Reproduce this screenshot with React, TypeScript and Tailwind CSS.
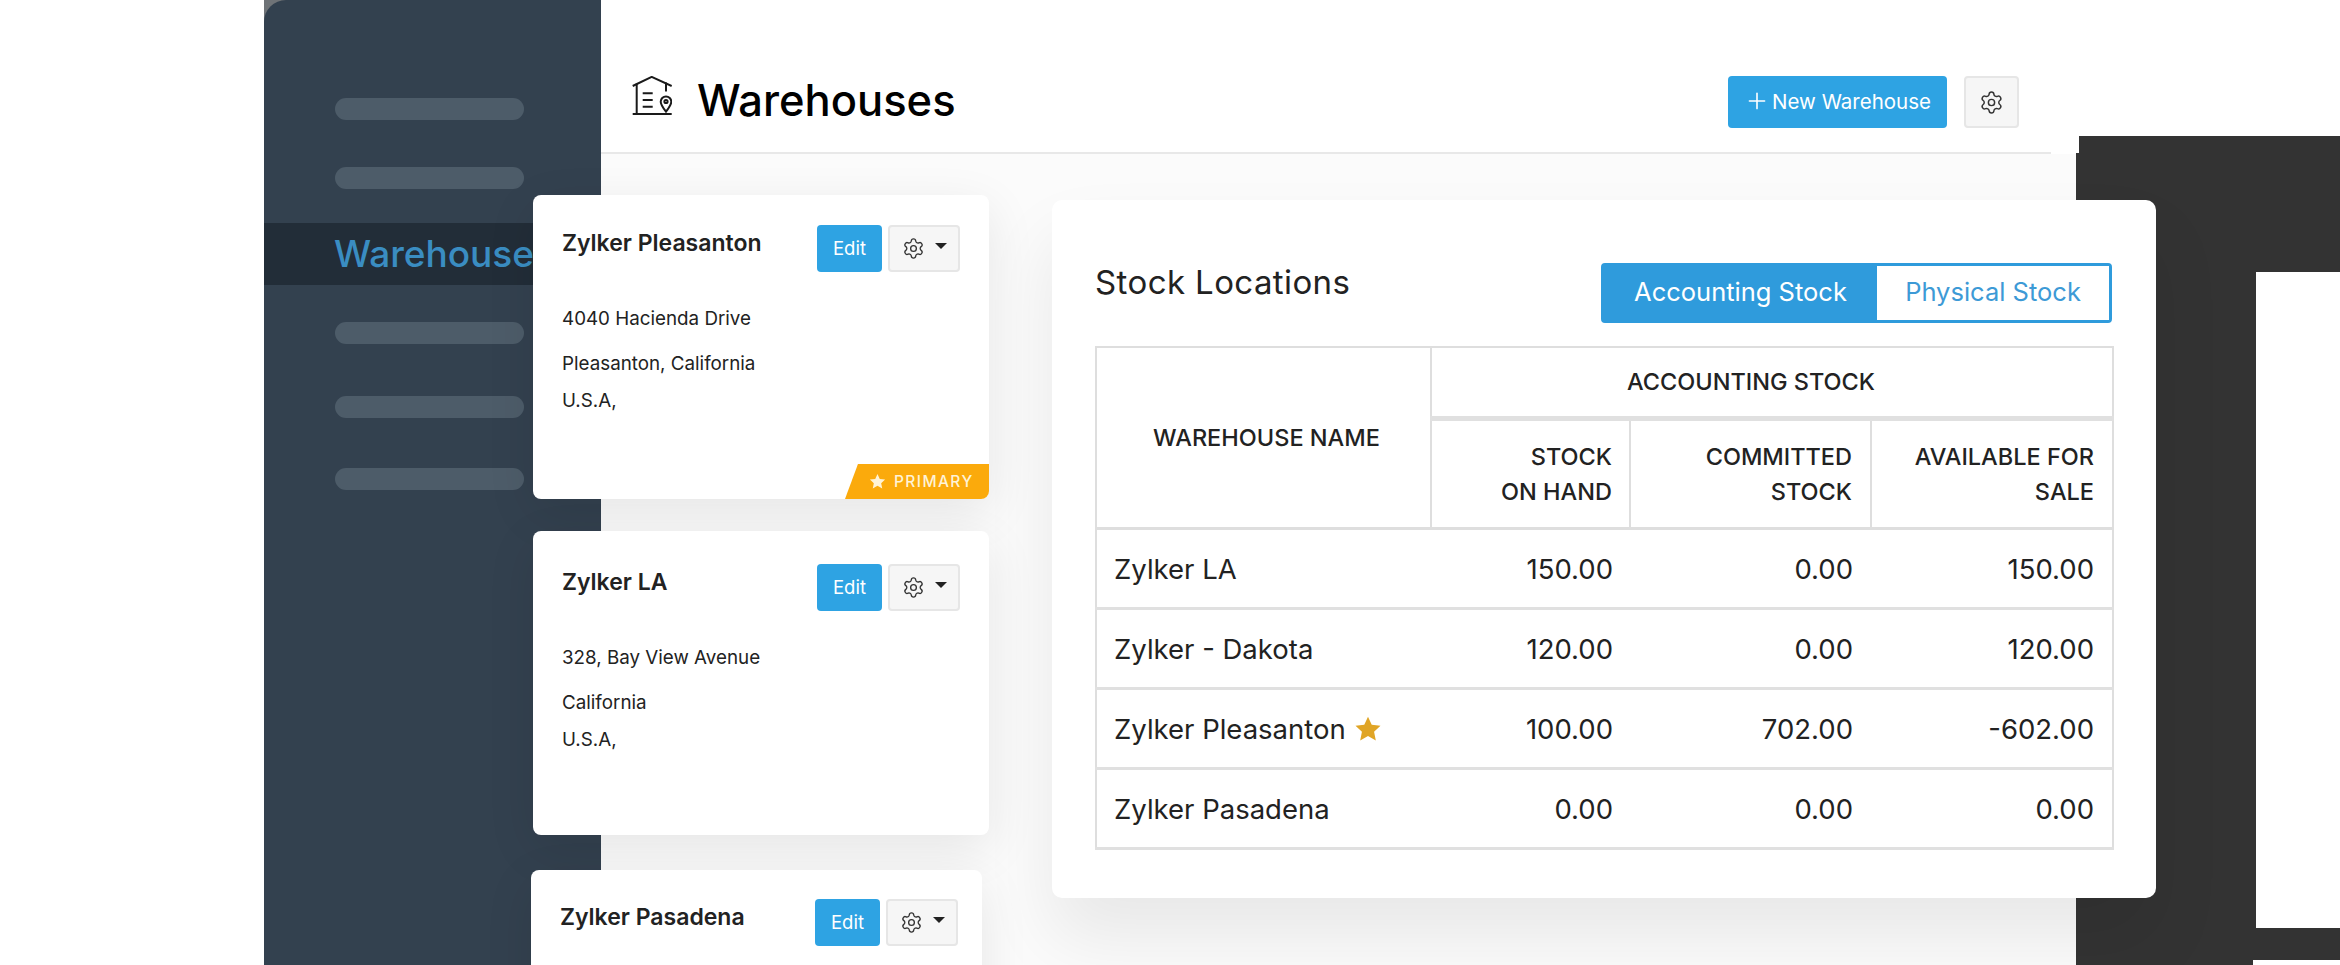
import { Settings, Plus } from 'lucide-react';

const sideRows = [
  { mt: 'mt-[98px]' },
  { mt: 'mt-[47px]' },
  { mt: 'mt-[34px]', active: true },
  { mt: 'mt-[37px]' },
  { mt: 'mt-[52px]' },
  { mt: 'mt-[50px]' },
];

const stock = [
  { name: 'Zylker LA', hand: '150.00', committed: '0.00', available: '150.00' },
  { name: 'Zylker - Dakota', hand: '120.00', committed: '0.00', available: '120.00' },
  { name: 'Zylker Pleasanton', hand: '100.00', committed: '702.00', available: '-602.00', primary: true },
  { name: 'Zylker Pasadena', hand: '0.00', committed: '0.00', available: '0.00' },
];

function WarehouseIcon() {
  return (
    <svg width="40" height="40" viewBox="0 0 40 40" fill="none" stroke="#1a1a1a" strokeWidth="2" className="shrink-0">
      <path d="M.7 10 19.7.9 39.7 10" />
      <path d="M4.7 7.5V38M34 6.5v9M.7 38h39" />
      <path d="M10.7 17.3h10M10.7 24h10M10.7 30.7h10" />
      <path d="M34 35.7c-3-4-5.3-7-5.3-10a5.3 5.3 0 0 1 10.6 0c0 3-2.3 6-5.3 10Z" />
      <circle cx="34" cy="25.5" r="1.6" />
    </svg>
  );
}

function Star({ className }: { className: string }) {
  return (
    <svg viewBox="0 0 24 24" className={className} fill="currentColor">
      <path d="M12 1.5l3.2 6.9 7.5.9-5.5 5.1 1.5 7.4L12 18.1l-6.7 3.7 1.5-7.4L1.3 9.3l7.5-.9z" />
    </svg>
  );
}

function CardButtons() {
  return (
    <div className="flex gap-[6px]">
      <button className="w-[65px] h-[47px] rounded-[4px] bg-[#2ea3e3] text-white text-[18.5px]">Edit</button>
      <button className="w-[72px] h-[47px] rounded-[4px] bg-[#f6f6f6] border-2 border-[#e6e6e6] flex items-center justify-center gap-[10px] text-[#333]">
        <Settings className="w-[23px] h-[23px]" strokeWidth={1.4} />
        <span className="w-0 h-0 mb-[6px] border-x-[6px] border-x-transparent border-t-[6px] border-t-[#222]" />
      </button>
    </div>
  );
}

function Card({ name, lines, primary, className, headClass }: { name: string; lines: string[]; primary?: boolean; className: string; headClass: string }) {
  return (
    <div className={`relative bg-white rounded-[8px] shadow-[0_14px_50px_rgba(0,0,0,0.09)] ${className}`}>
      <div className={`flex justify-between ${headClass}`}>
        <div className="text-[23px] leading-[36px] font-semibold text-[#222]">{name}</div>
        <CardButtons />
      </div>
      <div className="pl-[29px] text-[18.8px] text-[#222]">
        <div className="leading-[30px] mt-[32px]">{lines[0]}</div>
        <div className="leading-[30px] mt-[15px]">{lines[1]}</div>
        <div className="leading-[30px] mt-[7px]">{lines[2]}</div>
      </div>
      {primary && (
        <div className="absolute right-0 bottom-0 w-[144px] h-[35px] bg-[#fbaa0c] rounded-br-[8px] rounded-tl-[10px] [clip-path:polygon(9%_0,100%_0,100%_100%,0_100%)] flex items-center pl-[24px] gap-[8px] text-[#fff3d6]">
          <Star className="w-[17px] h-[17px]" />
          <span className="text-[15.5px] font-medium tracking-[1.4px]">PRIMARY</span>
        </div>
      )}
    </div>
  );
}

export default function App() {
  return (
    <div className="relative w-[2340px] h-[965px] overflow-hidden bg-white flex pl-[264px] font-['Inter',sans-serif]">
      {/* dark device frame behind the page */}
      <div className="absolute left-[2079px] top-[136px] w-[261px] h-[136px] bg-[#333333]" />
      <div className="absolute left-[2076px] top-[153px] w-[180px] h-[807px] bg-[#333333]" />
      <div className="absolute left-[2256px] top-[928px] w-[84px] h-[32px] bg-[#333333]" />
      <div className="absolute left-[2076px] top-[960px] w-[177px] h-[5px] bg-[#333333]" />

      <div className="w-[337px] shrink-0 bg-[#6f7377]">
        <aside className="h-full rounded-tl-[22px] bg-[#33414f] flex flex-col overflow-hidden">
          {sideRows.map((row, i) =>
            row.active ? (
              <div key={i} className={`${row.mt} h-[62px] bg-[#222d38] pl-[70px] flex items-center`}>
                <span className="text-[37px] font-medium text-[#3a8dc2] whitespace-nowrap">Warehouses</span>
              </div>
            ) : (
              <div key={i} className={`${row.mt} ml-[71px] w-[189px] h-[22px] rounded-full bg-[#4d5c69]`} />
            )
          )}
        </aside>
      </div>

      <main className="relative z-10 w-[1475px] shrink-0 flex flex-col">
        <header className="h-[154px] shrink-0 bg-white pr-[25px]">
          <div className="h-full border-b-2 border-[#e8e8e8] flex items-start pl-[31px] pr-[32px]">
            <div className="mt-[76px]"><WarehouseIcon /></div>
            <h1 className="ml-[25px] mt-[72px] text-[43.5px] leading-[56px] font-medium text-black">Warehouses</h1>
            <div className="ml-auto mt-[76px] flex gap-[17px]">
              <button className="w-[219px] h-[52px] rounded-[4px] bg-[#2ea3e3] text-white text-[20.5px] flex items-center justify-center gap-[2px]">
                <Plus className="w-[26px] h-[26px] -mt-[3px]" strokeWidth={1.5} />
                New Warehouse
              </button>
              <button className="w-[55px] h-[52px] rounded-[4px] bg-[#f6f6f6] border-2 border-[#e6e6e6] flex items-center justify-center text-[#333]">
                <Settings className="w-[25px] h-[25px]" strokeWidth={1.4} />
              </button>
            </div>
          </div>
        </header>

        <div className="flex-1 bg-[#fbfbfb] flex items-start">
          <div className="-ml-[68px] w-[456px] shrink-0 flex flex-col pt-[41px]">
            <Card className="h-[304px]" headClass="pl-[29px] pr-[29px] pt-[30px]" name="Zylker Pleasanton" lines={['4040 Hacienda Drive', 'Pleasanton, California', 'U.S.A,']} primary />
            <Card className="h-[304px] mt-[32px]" headClass="pl-[29px] pr-[29px] pt-[33px]" name="Zylker LA" lines={['328, Bay View Avenue', 'California', 'U.S.A,']} />
            <Card className="h-[304px] w-[451px] mt-[35px] -ml-[2px]" headClass="pl-[29px] pr-[24px] pt-[29px]" name="Zylker Pasadena" lines={['', '', '']} />
          </div>

          <section className="ml-[63px] mt-[46px] w-[1104px] h-[698px] shrink-0 bg-white rounded-[10px] shadow-[0_40px_70px_rgba(0,0,0,0.08)] pl-[43px] pr-[44px] pt-[63px]">
            <div className="flex justify-between items-start h-[83px]">
              <h2 className="text-[33px] leading-[44px] text-[#222] tracking-[0.4px] -mt-[3px]">Stock Locations</h2>
              <div className="flex w-[511px] h-[60px] rounded-[4px] border-[3px] border-[#2f9bdc] text-[25.5px]">
                <div className="w-[273px] pb-[2px] bg-[#2f9bdc] text-white flex items-center justify-center">Accounting Stock</div>
                <div className="flex-1 pb-[2px] bg-white text-[#3d9ad6] flex items-center justify-center">Physical Stock</div>
              </div>
            </div>

            <table className="w-[1017px] table-fixed border-collapse border-2 border-[#dedede] text-[#222]">
              <colgroup>
                <col className="w-[335px]" />
                <col className="w-[199px]" />
                <col className="w-[241px]" />
                <col className="w-[242px]" />
              </colgroup>
              <thead className="text-[23.5px]">
                <tr className="h-[71px]">
                  <th rowSpan={2} className="font-medium border-r-2 border-b-[3px] border-[#dedede] text-center pl-[6px]">WAREHOUSE NAME</th>
                  <th colSpan={3} className="font-medium border-b-[5px] border-[#e0e0e0] text-center pr-[42px]">ACCOUNTING STOCK</th>
                </tr>
                <tr className="h-[110px] leading-[35px]">
                  <th className="font-medium border-r-2 border-b-[3px] border-[#dedede] text-right pr-[17px]">STOCK<br />ON HAND</th>
                  <th className="font-medium border-r-2 border-b-[3px] border-[#dedede] text-right pr-[18px]">COMMITTED<br />STOCK</th>
                  <th className="font-medium border-b-[3px] border-[#dedede] text-right pr-[18px]">AVAILABLE FOR<br />SALE</th>
                </tr>
              </thead>
              <tbody className="text-[27.5px]">
                {stock.map(row => (
                  <tr key={row.name} className="h-[80px] border-b-[3px] border-[#e0e0e0]">
                    <td className="pl-[17px] pt-[4px]">
                      <span className="inline-flex items-center gap-[8px]">
                        {row.name}
                        {row.primary && <Star className="w-[28px] h-[28px] text-[#e0a526] -mt-[3px]" />}
                      </span>
                    </td>
                    <td className="text-right pr-[17px] pt-[4px]">{row.hand}</td>
                    <td className="text-right pr-[18px] pt-[4px]">{row.committed}</td>
                    <td className="text-right pr-[18px] pt-[4px]">{row.available}</td>
                  </tr>
                ))}
              </tbody>
            </table>
          </section>
        </div>
      </main>
    </div>
  );
}
